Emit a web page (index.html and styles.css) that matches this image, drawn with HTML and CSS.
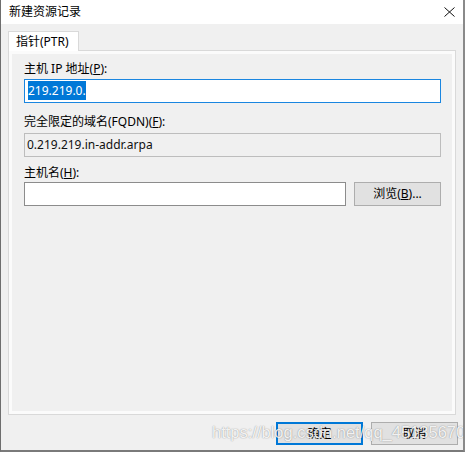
FILE: index.html
```html
<!DOCTYPE html>
<html lang="zh-CN">
<head>
<meta charset="utf-8">
<title>新建资源记录</title>
<link rel="stylesheet" href="styles.css">
</head>
<body>
<div class="window">
  <div class="titlebar">
    <span class="title">新建资源记录</span>
    <svg class="close" width="11" height="10" viewBox="0 0 11 10"><path d="M0.5 0.5 L10.5 9.5 M10.5 0.5 L0.5 9.5" stroke="#111" stroke-width="1" fill="none"/></svg>
  </div>
  <div class="content">
    <div class="tabs"><div class="tab">指针(PTR)</div></div>
    <div class="panel">
      <div class="label">主机 IP 地址(<u>P</u>):</div>
      <div class="input focus"><span class="sel">219.219.0.</span></div>
      <div class="label l2">完全限定的域名(FQDN)(<u>F</u>):</div>
      <div class="input readonly">0.219.219.in-addr.arpa</div>
      <div class="label l3">主机名(<u>H</u>):</div>
      <div class="row">
        <div class="input grow"></div>
        <div class="btn">浏览(<u>B</u>)...</div>
      </div>
    </div>
    <div class="footer">
      <div class="btn primary">确定</div>
      <div class="btn">取消</div>
    </div>
  </div>
  <div class="watermark">https://blog.csdn.net/qq_45135670</div>
</div>
</body>
</html>
```
FILE: styles.css
```css
html, body {
  margin: 0;
  padding: 0;
  background: #f0f0f0;
}
.window {
  position: relative;
  width: 465px;
  height: 452px;
  box-sizing: border-box;
  background: #f0f0f0;
  border-left: 1px solid #6e6e6e;
  border-right: 2px solid #8a8a8a;
  border-bottom: 2px solid #7a7a7a;
  font-family: "Noto Sans", "Noto Sans CJK SC", sans-serif;
  font-size: 12px;
  color: #000;
  display: flex;
  flex-direction: column;
  overflow: hidden;
}
.titlebar {
  height: 24px;
  flex: none;
  background: #fff;
  display: flex;
  align-items: center;
  justify-content: space-between;
  padding: 0 8px 0 8px;
}
.title {
  line-height: 16px;
}
.close {
  display: block;
}
.content {
  padding: 7px 0 0 7px;
}
.tabs {
  display: flex;
  position: relative;
  z-index: 1;
  margin-bottom: -1px;
}
.tab {
  width: 71px;
  height: 20px;
  box-sizing: border-box;
  border: 1px solid #d9d9d9;
  border-bottom: none;
  background: #fff;
  line-height: 19px;
  padding-left: 7px;
}
.panel {
  width: 448px;
  height: 365px;
  box-sizing: border-box;
  border: 1px solid #d9d9d9;
  box-shadow: inset 0 0 0 3px #fbfbfb;
  background: #f0f0f0;
  padding: 10px 14px 0 15px;
  display: flex;
  flex-direction: column;
}
.label {
  line-height: 16px;
  height: 16px;
}
.label.l2 {
  margin-top: 11px;
}
.label.l3 {
  margin-top: 8px;
}
.input {
  margin-top: 2px;
  height: 24px;
  box-sizing: border-box;
  border: 1px solid #8c8c8c;
  background: #fff;
  padding: 0 3px;
  line-height: 22px;
  white-space: nowrap;
}
.input.focus {
  border-color: #1a86e0;
}
.sel {
  background: #0078d7;
  color: #fff;
  padding: 1px 0;
}
.input.readonly {
  margin-top: 3px;
  background: #f0f0f0;
  border-color: #bdbdbd;
  padding: 0 2px;
  color: #111;
}
.row {
  margin-top: 1px;
  display: flex;
  gap: 8px;
}
.input.grow {
  flex: 1;
  margin-top: 0;
}
.btn {
  width: 87px;
  height: 24px;
  box-sizing: border-box;
  border: 1px solid #adadad;
  background: #e1e1e1;
  text-align: center;
  line-height: 22px;
}
.footer {
  display: flex;
  justify-content: flex-end;
  gap: 8px;
  margin-top: 7px;
  padding-right: 5px;
}
.footer .btn {
  height: 23px;
  line-height: 21px;
}
.btn.primary {
  border: 2px solid #0078d7;
  line-height: 19px;
}
.watermark {
  position: absolute;
  left: 211px;
  top: 422px;
  font-family: "Liberation Sans", sans-serif;
  font-size: 16.5px;
  line-height: 20px;
  color: rgba(255, 255, 255, 0.9);
  text-shadow: 0 0 1px rgba(0, 0, 0, 0.35), 0 0 2px rgba(0, 0, 0, 0.15);
  white-space: nowrap;
  pointer-events: none;
}
```
